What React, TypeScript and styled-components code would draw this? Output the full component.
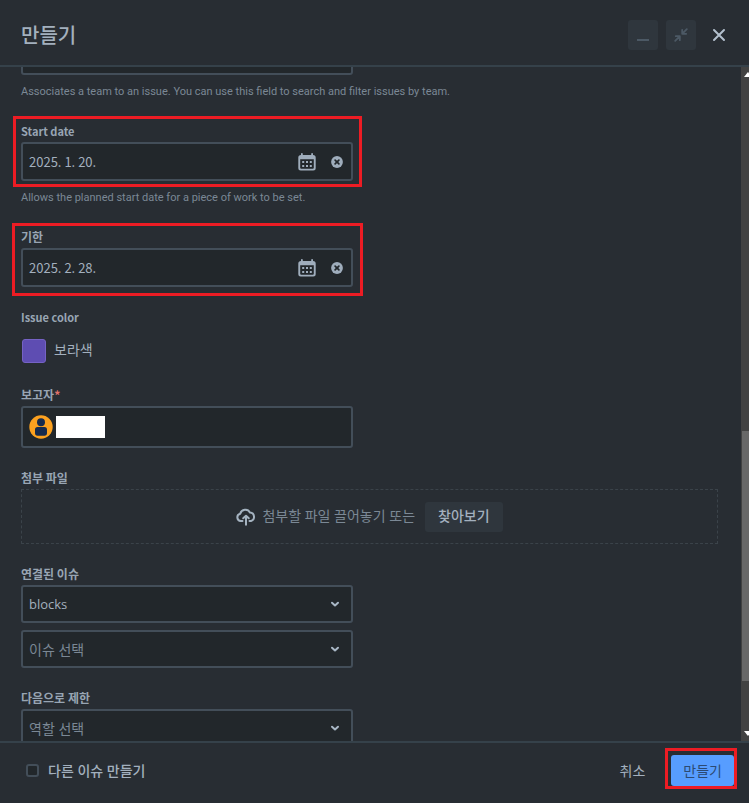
import React, { useState } from "react";
import styled, { createGlobalStyle } from "styled-components";

const color = {
  surface: "#282d33",
  field: "#22272b",
  border: "#434e59",
  rule: "#35414a",
  text: "#a3b0be",
  label: "#98a5b3",
  subtle: "#7b8895",
  neutral: "#2f363d",
  brand: "#579dff",
  mark: "#ed1c24",
};

const font = {
  body: `"Open Sans", "Noto Sans CJK KR", sans-serif`,
  compact: `"Noto Sans CJK KR", "Open Sans", sans-serif`,
  help: `Roboto, "Noto Sans CJK KR", sans-serif`,
};

const Global = createGlobalStyle`
  *, *::before, *::after { box-sizing: border-box; }
  body {
    margin: 0;
    background: ${color.surface};
    color: ${color.text};
    font-family: ${font.body};
    font-size: 14px;
  }
  button, input, select { font: inherit; color: inherit; margin: 0; }
  button { border: 0; padding: 0; background: none; }
  svg { display: block; flex: none; }
`;

const Dialog = styled.div`
  display: grid;
  grid-template-rows: auto minmax(0, 1fr) auto;
  height: 100vh;
`;

const Header = styled.header`
  display: flex;
  align-items: center;
  gap: 8px;
  padding: 20px 15px 15px 21px;
  border-bottom: 2px solid ${color.rule};
`;

const Title = styled.h1`
  flex: 1;
  margin: 0;
  padding-top: 2px;
  font-size: 20px;
  line-height: 28px;
  font-weight: 500;
`;

const HeaderButton = styled.button<{ $filled?: boolean }>`
  display: grid;
  place-items: center;
  width: 30px;
  height: 30px;
  border-radius: 3px;
  background: ${(p) => (p.$filled ? color.neutral : "transparent")};
  color: ${(p) => (p.$filled ? "#4c5965" : "#b3c0ce")};
`;

const Body = styled.div`
  display: flex;
  overflow: hidden;
`;

const Form = styled.form`
  flex: 1;
  min-width: 0;
  padding: 0 23px 0 21px;
`;

const Section = styled.div`
  margin-bottom: 22px;
`;

const Marked = styled.div<{ $wide?: boolean }>`
  position: relative;
  width: min(100%, 332px);
  &::after {
    content: "";
    position: absolute;
    inset: ${(p) => (p.$wide ? "-6px -10px -9px -9px" : "-7px -9px -6px -8px")};
    border: 3px solid ${color.mark};
    pointer-events: none;
  }
`;

const Label = styled.label<{ $latin?: boolean }>`
  display: block;
  margin-bottom: 3px;
  font-family: ${font.compact};
  font-size: ${(p) => (p.$latin ? "11px" : "12px")};
  line-height: 16px;
  font-weight: ${(p) => (p.$latin ? 700 : 600)};
  color: ${color.label};
`;

const Required = styled.span`
  color: #e2726a;
`;

const Help = styled.p`
  margin: 8px 0 0;
  padding-bottom: 1px;
  font-family: ${font.help};
  font-size: 11px;
  line-height: 17px;
  color: ${color.subtle};
`;

const Control = styled.div<{ $tall?: boolean }>`
  display: flex;
  align-items: center;
  width: min(100%, 332px);
  height: ${(p) => (p.$tall ? "42px" : "39px")};
  border: 2px solid ${color.border};
  border-radius: 3px;
  background: ${color.field};
`;

const Clipped = styled.div`
  display: flex;
  align-items: flex-end;
  height: 8px;
  overflow: hidden;
`;

const DateInput = styled.input`
  flex: 1;
  min-width: 0;
  height: 100%;
  padding: 0 6px;
  border: 0;
  background: none;
  font-family: ${font.compact};
  font-size: 13px;
`;

const IconButton = styled.button`
  display: grid;
  place-items: center;
  width: 30px;
  height: 100%;
  color: #9fadbc;
  &:last-child {
    width: 29px;
  }
`;

const SelectWrap = styled.div`
  display: grid;
  align-items: center;
  width: min(100%, 332px);
  & + & {
    margin-top: 7px;
  }
  & > * {
    grid-area: 1 / 1;
  }
  & > svg {
    justify-self: end;
    margin-right: 12px;
    pointer-events: none;
    color: #a9b7c6;
  }
`;

const Select = styled.select<{ $placeholder?: boolean }>`
  appearance: none;
  width: 100%;
  height: 38px;
  padding: 0 30px 0 6px;
  border: 2px solid ${color.border};
  border-radius: 3px;
  background: ${color.field};
  color: ${(p) => (p.$placeholder ? color.subtle : color.text)};
  font-size: ${(p) => (p.$placeholder ? "14px" : "13px")};
`;

const ColorButton = styled.button`
  display: flex;
  align-items: center;
  gap: 8px;
  height: 24px;
  margin: 14px 0 24px;
  padding-left: 1px;
  line-height: 22px;
`;

const ColorName = styled.span`
  padding-bottom: 2px;
`;

const Swatch = styled.span`
  width: 24px;
  height: 24px;
  border: 1px solid #7562c4;
  border-radius: 3px;
  background: #5e4db2;
`;

const Reporter = styled.button`
  display: flex;
  align-items: center;
  gap: 3px;
  width: 100%;
  height: 100%;
  padding: 0 6px;
`;

const HiddenName = styled.span`
  width: 49px;
  height: 22px;
  background: #fff;
`;

const DropZone = styled.div`
  display: flex;
  align-items: center;
  justify-content: center;
  height: 55px;
  border: 1px dashed #3b434a;
  color: ${color.subtle};
`;

const DropText = styled.span`
  margin: 0 10px 0 6px;
  padding-bottom: 2px;
  line-height: 28px;
`;

const Browse = styled.button`
  height: 30px;
  padding: 0 13px 2px;
  border-radius: 3px;
  background: ${color.neutral};
  color: ${color.text};
  font-weight: 500;
  line-height: 28px;
`;

const ScrollTrack = styled.div`
  display: flex;
  flex-direction: column;
  align-items: flex-start;
  width: 8px;
  overflow: hidden;
  background: #424242;
`;

const ScrollThumb = styled.div`
  width: 7px;
  height: 250px;
  margin: 364px 0 0 1px;
  background: #686868;
`;

const ScrollArrows = styled.div`
  display: flex;
  flex-direction: column;
  justify-content: space-between;
  height: 100%;
  padding: 5px 0 5px 3px;
`;

const ScrollLayers = styled.div`
  display: grid;
  height: 100%;
  & > * {
    grid-area: 1 / 1;
  }
`;

const Footer = styled.footer`
  display: flex;
  align-items: center;
  gap: 26px;
  padding: 12px 15px 17px 26px;
  border-top: 2px solid ${color.rule};
`;

const CheckLabel = styled.label`
  display: flex;
  align-items: center;
  gap: 9px;
  flex: 1;
  font-weight: 500;
`;

const CheckText = styled.span`
  padding-bottom: 2px;
`;

const Checkbox = styled.input`
  appearance: none;
  width: 13px;
  height: 13px;
  border: 2px solid ${color.border};
  border-radius: 3px;
  background: ${color.field};
  &:checked {
    background: ${color.brand};
  }
`;

const Cancel = styled.button`
  height: 31px;
  padding-bottom: 2px;
`;

const Submit = styled.button`
  position: relative;
  height: 31px;
  padding: 0 12px 2px;
  border-radius: 3px;
  background: ${color.brand};
  color: #2c4a72;
  &::after {
    content: "";
    position: absolute;
    inset: -7px -3px -3px -6px;
    border: 3px solid ${color.mark};
    pointer-events: none;
  }
`;

const Chevron = () => (
  <svg width="12" height="12" viewBox="0 0 12 12" fill="none" stroke="currentColor" strokeWidth="2" strokeLinecap="round" strokeLinejoin="round">
    <path d="M3 4.700 6 7.500l3-2.800" />
  </svg>
);

const CalendarIcon = () => (
  <svg width="18" height="18" viewBox="0 0 18 18">
    <path
      fill="currentColor"
      fillRule="evenodd"
      d="M3 2V.8Q3 0 3.900 0t.9.8V2h8.400V.8q0-.8.9-.8t.9.8V2q2.700 0 2.700 2.500V15q0 2.500-2.500 2.500H2.800Q.3 17.500.3 15V4.500Q.3 2 3 2ZM2.200 6.200V14.700q0 1 1 1H14.800q1 0 1-1V6.200Z"
    />
    <path
      fill="currentColor"
      d="M4.200 8h2v2h-2zM8 8h2v2H8zM11.800 8h2v2h-2zM4.200 12h2v2h-2zM8 12h2v2H8zM11.800 12h2v2h-2z"
    />
  </svg>
);

const ClearIcon = () => (
  <svg width="12" height="12" viewBox="0 0 12 12">
    <circle cx="6" cy="6" r="5.900" fill="currentColor" />
    <path d="m4.100 4.100 3.800 3.800m0-3.800L4.100 7.900" stroke={color.field} strokeWidth="1.700" strokeLinecap="round" />
  </svg>
);

const AvatarIcon = () => (
  <svg width="24" height="24" viewBox="0 0 24 24">
    <circle cx="12" cy="12" r="11.700" fill="#fca11f" />
    <circle cx="12" cy="7.300" r="4" fill="#172b4d" />
    <rect x="6" y="12" width="12" height="8.700" rx="2.600" fill="#172b4d" />
  </svg>
);

const UploadIcon = () => (
  <svg width="20" height="18" viewBox="0 0 20 18" fill="none" stroke="#a5b3c1" strokeWidth="2" strokeLinecap="round" strokeLinejoin="round">
    <path d="M6.500 13H4.800A3.700 3.700 0 0 1 4.200 5.700 5.300 5.300 0 0 1 14 4.600 4.300 4.300 0 0 1 15 13h-1.500" />
    <path d="M10 16.800V8M7.200 10.300 10 7.700l2.800 2.600" />
  </svg>
);

const MinimizeIcon = () => (
  <svg width="14" height="14" viewBox="0 0 14 14" stroke="currentColor" strokeWidth="2">
    <path d="M1 12h12" />
  </svg>
);

const ShrinkIcon = () => (
  <svg width="14" height="14" viewBox="0 0 14 14" fill="none" stroke="currentColor" strokeWidth="1.800" strokeLinecap="round" strokeLinejoin="round">
    <path d="M12.800 1.200 8.400 5.600M8.200 1.800v4h4M1.200 12.800l4.400-4.400M1.800 8.200h4v4" />
  </svg>
);

const CloseIcon = () => (
  <svg width="14" height="14" viewBox="0 0 14 14" stroke="currentColor" strokeWidth="2" strokeLinecap="round">
    <path d="m2 2 10 10M12 2 2 12" />
  </svg>
);

const ArrowIcon = ({ down }: { down?: boolean }) => (
  <svg width="8" height="5" viewBox="0 0 8 5" fill="#fff">
    <path d={down ? "M0 0h8L4 5z" : "M0 5h8L4 0z"} />
  </svg>
);

interface DateFieldProps {
  id: string;
  label: string;
  initial: string;
  latin?: boolean;
  wide?: boolean;
}

function DateField({ id, label, initial, latin, wide }: DateFieldProps) {
  const [value, setValue] = useState(initial);
  return (
    <Marked $wide={wide}>
      <Label htmlFor={id} $latin={latin}>{label}</Label>
      <Control>
        <DateInput id={id} value={value} onChange={(e) => setValue(e.target.value)} />
        <IconButton type="button" aria-label="Open calendar"><CalendarIcon /></IconButton>
        <IconButton type="button" aria-label="Clear date" onClick={() => setValue("")}><ClearIcon /></IconButton>
      </Control>
    </Marked>
  );
}

interface PickerProps {
  id: string;
  text: string;
  placeholder?: boolean;
  ariaLabel?: string;
}

function Picker({ id, text, placeholder, ariaLabel }: PickerProps) {
  return (
    <SelectWrap>
      <Select id={id} aria-label={ariaLabel} $placeholder={placeholder}>
        <option>{text}</option>
      </Select>
      <Chevron />
    </SelectWrap>
  );
}

export default function App() {
  return (
    <Dialog role="dialog" aria-labelledby="dialog-title">
      <Global />
      <Header>
        <Title id="dialog-title">만들기</Title>
        <HeaderButton type="button" $filled aria-label="Minimize"><MinimizeIcon /></HeaderButton>
        <HeaderButton type="button" $filled aria-label="Shrink"><ShrinkIcon /></HeaderButton>
        <HeaderButton type="button" aria-label="Close"><CloseIcon /></HeaderButton>
      </Header>

      <Body>
        <Form id="issue-form" onSubmit={(e) => e.preventDefault()}>
          <Section>
            <Clipped><Control /></Clipped>
            <Help>Associates a team to an issue. You can use this field to search and filter issues by team.</Help>
          </Section>
          <Section>
            <DateField id="start" label="Start date" initial="2025. 1. 20." latin />
            <Help>Allows the planned start date for a piece of work to be set.</Help>
          </Section>
          <Section>
            <DateField id="due" label="기한" initial="2025. 2. 28." wide />
          </Section>
          <Section>
            <Label as="div" $latin>Issue color</Label>
            <ColorButton type="button"><Swatch /><ColorName>보라색</ColorName></ColorButton>
          </Section>
          <Section>
            <Label htmlFor="reporter">보고자<Required>*</Required></Label>
            <Control $tall>
              <Reporter id="reporter" type="button"><AvatarIcon /><HiddenName /></Reporter>
            </Control>
          </Section>
          <Section>
            <Label as="div">첨부 파일</Label>
            <DropZone>
              <UploadIcon />
              <DropText>첨부할 파일 끌어놓기 또는</DropText>
              <Browse type="button">찾아보기</Browse>
            </DropZone>
          </Section>
          <Section>
            <Label htmlFor="link-type">연결된 이슈</Label>
            <Picker id="link-type" text="blocks" />
            <Picker id="link-issue" text="이슈 선택" placeholder ariaLabel="이슈 선택" />
          </Section>
          <Section>
            <Label htmlFor="role">다음으로 제한</Label>
            <Picker id="role" text="역할 선택" placeholder />
          </Section>
        </Form>
        <ScrollTrack aria-hidden="true">
          <ScrollLayers>
            <ScrollArrows><ArrowIcon /><ArrowIcon down /></ScrollArrows>
            <ScrollThumb />
          </ScrollLayers>
        </ScrollTrack>
      </Body>

      <Footer>
        <CheckLabel><Checkbox type="checkbox" /><CheckText>다른 이슈 만들기</CheckText></CheckLabel>
        <Cancel type="button">취소</Cancel>
        <Submit type="submit" form="issue-form">만들기</Submit>
      </Footer>
    </Dialog>
  );
}
